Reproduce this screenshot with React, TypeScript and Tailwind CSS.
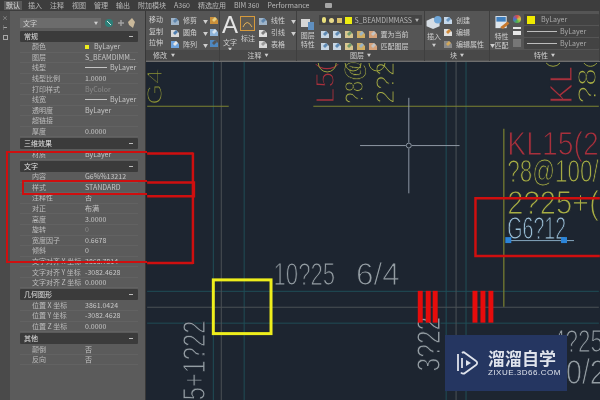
import * as React from "react";

const menu = ["默认", "插入", "注释", "视图", "管理", "输出", "附加模块", "A360", "精选应用", "BIM 360", "Performance"];

type Row = { label: string; value?: string; line?: boolean; swatch?: boolean; dim?: boolean };

const sections: Array<{ title: string; rows: Row[] }> = [
  {
    title: "常规",
    rows: [
      { label: "颜色", value: "ByLayer", swatch: true },
      { label: "图层", value: "S_BEAMDIMM..." },
      { label: "线型", value: "ByLayer", line: true },
      { label: "线型比例", value: "1.0000" },
      { label: "打印样式", value: "ByColor", dim: true },
      { label: "线宽", value: "ByLayer", line: true },
      { label: "透明度", value: "ByLayer" },
      { label: "超链接" },
      { label: "厚度", value: "0.0000" },
    ],
  },
  { title: "三维效果", rows: [{ label: "材质", value: "ByLayer" }] },
  {
    title: "文字",
    rows: [
      { label: "内容", value: "G6%%13212" },
      { label: "样式", value: "STANDARD" },
      { label: "注释性", value: "否" },
      { label: "对正", value: "布满" },
      { label: "高度", value: "3.0000" },
      { label: "旋转", value: "0", dim: true },
      { label: "宽度因子", value: "0.6678" },
      { label: "倾斜", value: "0" },
      { label: "文字对齐 X 坐标", value: "3868.7814" },
      { label: "文字对齐 Y 坐标", value: "-3082.4628" },
      { label: "文字对齐 Z 坐标", value: "0.0000" },
    ],
  },
  {
    title: "几何图形",
    rows: [
      { label: "位置 X 坐标", value: "3861.0424" },
      { label: "位置 Y 坐标", value: "-3082.4628" },
      { label: "位置 Z 坐标", value: "0.0000" },
    ],
  },
  {
    title: "其他",
    rows: [
      { label: "颠倒", value: "否" },
      { label: "反向", value: "否" },
    ],
  },
];

const Glyph = ({ c = "#9fb4c8", d = "#5f86ad" }: { c?: string; d?: string }) => (
  <svg width="10" height="10" viewBox="0 0 10 10" className="shrink-0">
    <path d="M1 2h5l3 3v4H1z" fill={c} />
    <path d="M3 5l3-3 2 2-3 3z" fill={d} />
  </svg>
);

const ToolRow = ({ text, caret, c, d }: { text: string; caret?: boolean; c?: string; d?: string }) => (
  <div className="flex items-center gap-[3px] h-[12px] whitespace-nowrap">
    <Glyph c={c} d={d} />
    <span>{text}</span>
    {caret && <span className="text-[5px] ml-[3px]">▼</span>}
  </div>
);

const Group = ({
  title,
  w,
  left,
  children,
}: {
  title: string;
  w: string;
  left?: boolean;
  children: React.ReactNode;
}) => (
  <div className={`${w} shrink-0 flex flex-col border-r border-[#3f3f3f]`}>
    <div className="h-[39px] flex">{children}</div>
    <div
      className={
        left
          ? "h-[10px] bg-[#484848] flex items-center pl-[7px] gap-[4px]"
          : "h-[10px] bg-[#484848] flex items-center justify-center gap-[3px]"
      }
    >
      <span>{title}</span>
      <span className="text-[4px]">▼</span>
    </div>
  </div>
);

const Combo = ({ children }: { children: React.ReactNode }) => (
  <div className="h-[11px] mb-px flex items-center bg-[#434343] rounded-[1px] px-[3px] text-[#a9a9a9]">{children}</div>
);

const LineValue = () => <span className="w-[22px] h-px bg-[#c4c4c4] mr-[3px]" />;

const PropertiesPanel = () => (
  <div className="w-[146px] shrink-0 flex bg-[#5b5b5b] border-r border-[#383838] h-full">
    <div className="w-[12px] bg-[#4a4a4a] flex flex-col items-center gap-[4px] pt-[4px] text-[#a8a8a8]">
      <span className="text-[6px] leading-[6px]">×</span>
      <span className="text-[5px] leading-[6px]">⊢</span>
      <span className="w-[5px] h-[5px] border border-[#a8a8a8]" />
    </div>
    <div className="flex-1 pl-[10px] pr-[7px] pt-[7px]">
      <div className="flex items-center h-[10px] mb-[3px]">
        <div className="w-[81px] h-[10px] bg-[#6c6c6c] flex items-center justify-between px-[3px] text-[#d0d0d0]">
          <span>文字</span>
          <span className="text-[4px]">▼</span>
        </div>
        <svg width="34" height="12" viewBox="0 0 34 12" className="ml-[3px]">
          <circle cx="5" cy="6" r="4" fill="#2d7f78" />
          <path d="M3 4l4 4" stroke="#d8e8e8" strokeWidth="1" />
          <path d="M17 3v6M14 6h6" stroke="#a3a3a3" strokeWidth="1.4" />
          <path d="M28 1l3 4-2 6-4-3-1-3z" fill="#c9b89a" />
        </svg>
      </div>
      {sections.map((s) => (
        <div key={s.title}>
          <div className="h-[11px] mt-px bg-[#3b3b3b] flex items-center justify-between pl-[4px] pr-[5px] text-[#e2e2e2] rounded-[1px]">
            <span>{s.title}</span>
            <span className="w-[4px] h-px bg-[#bdbdbd]" />
          </div>
          {s.rows.map((r) => (
            <div key={r.label} className="h-[10.6px] flex items-center border-b border-[#626262] whitespace-nowrap">
              <span className="w-[65px] shrink-0 pl-[12px] text-[#bdbdbd]">{r.label}</span>
              {r.swatch && <span className="w-[4px] h-[4px] bg-[#ecec1e] mr-[5px]" />}
              {r.line && <LineValue />}
              <span className={r.dim ? "text-[#8c8c8c]" : "text-[#c6c6c6]"}>{r.value}</span>
            </div>
          ))}
        </div>
      ))}
    </div>
  </div>
);

const Ribbon = () => (
  <div className="h-[50px] flex bg-[#555555] text-[#cfcfcf]">
    <Group title="修改" w="w-[74px]" left>
      <div className="flex flex-col pt-[4px] pl-[3px] gap-0 w-[26px]">
        <div className="h-[12px]">移动</div>
        <div className="h-[12px]">复制</div>
        <div className="h-[12px]">拉伸</div>
      </div>
      <div className="flex flex-col pt-[4px]">
        <ToolRow text="修剪" caret />
        <ToolRow text="圆角" caret c="#d8d8d8" d="#4f7eb0" />
        <ToolRow text="阵列" caret c="#6fa4e0" d="#e8e8e8" />
      </div>
      <div className="flex flex-col pt-[4px] pl-[1px]">
        <div className="h-[12px]"><Glyph c="#c98f3a" d="#e8d080" /></div>
        <div className="h-[12px]"><Glyph c="#8fb4d8" d="#d8e4ee" /></div>
        <div className="h-[12px]"><Glyph c="#4f88c0" d="#555555" /></div>
      </div>
    </Group>
    <Group title="注释" w="w-[77px]">
      <div className="w-[25px] flex flex-col items-center">
        <span className="text-[24px] leading-[26px] text-[#e4e4e4] font-['Liberation_Sans'] mt-px">A</span>
        <span className="leading-[9px]">文字</span>
        <span className="text-[4px] leading-[5px]">▼</span>
      </div>
      <div className="w-[20px] flex flex-col items-center pt-[5px]">
        <svg width="15" height="15" viewBox="0 0 15 15">
          <rect x="0.5" y="0.5" width="14" height="14" fill="#5f5a50" stroke="#d69a3c" />
          <path d="M3 11q4-9 9 0" fill="none" stroke="#e3b25a" />
        </svg>
        <span className="leading-[10px] mt-[2px]">标注</span>
      </div>
      <div className="flex flex-col pt-[4px] pl-[2px]">
        <ToolRow text="线性" caret />
        <ToolRow text="引线" caret c="#e0e0e0" d="#7f7f7f" />
        <ToolRow text="表格" c="#d8d8d8" d="#9a9a9a" />
      </div>
    </Group>
    <Group title="图层" w="w-[128px]">
      <div className="w-[23px] flex flex-col items-center pt-[5px] leading-[9px] text-center">
        <svg width="15" height="14" viewBox="0 0 15 14" className="mb-px">
          <path d="M1 3h9v8H1z" fill="#d6d6d6" />
          <path d="M8 6h6v8H8z" fill="#5f8fc0" />
        </svg>
        <span>图层</span>
        <span>特性</span>
      </div>
      <div className="flex-1 pt-[4px] pr-[2px]">
        <div className="h-[10px] bg-[#444444] flex items-center gap-[3px] px-[3px] text-[#b5b5b5] mb-[3px]">
          <span className="w-[4px] h-[6px] rounded-full bg-[#e9df7c]" />
          <span className="w-[5px] h-[5px] rounded-full bg-[#e8d98a]" />
          <span className="w-[5px] h-[5px] bg-[#d8bf6a]" />
          <span className="w-[7px] h-[7px] bg-[#eeee10]" />
          <span className="flex-1">S_BEAMDIMMASS</span>
          <span className="text-[4px]">▼</span>
        </div>
        {["置为当前", "匹配图层"].map((t) => (
          <div key={t} className="flex items-center h-[12px] gap-[2px] pl-[1px]">
            <Glyph c="#c7d6e4" d="#5d89b4" />
            <Glyph c="#c7d6e4" d="#5d89b4" />
            <Glyph c="#d8c690" d="#6f9a6a" />
            <Glyph c="#d2ae62" d="#9bb4c4" />
            <Glyph c="#d6a27a" d="#c4c4c4" />
            <span className="ml-[1px]">{t}</span>
          </div>
        ))}
      </div>
    </Group>
    <Group title="块" w="w-[65px]">
      <div className="w-[28px] flex flex-col items-center pt-[5px] leading-[9px]">
        <svg width="18" height="15" viewBox="0 0 18 15" className="mb-[2px]">
          <path d="M1 5l7-3 7 3v6l-7 3-7-3z" fill="#d6dde4" />
          <circle cx="13" cy="4" r="4" fill="#6fa6d8" />
        </svg>
        <span>插入</span>
        <span className="text-[4px]">▼</span>
      </div>
      <div className="flex flex-col pt-[3px]">
        <ToolRow text="创建" c="#c6d8ea" d="#6a96c0" />
        <ToolRow text="编辑" c="#e0e0e0" d="#d08a3a" />
        <ToolRow text="编辑属性" caret c="#8a8a8a" d="#d2a85a" />
      </div>
    </Group>
    <Group title="特性" w="flex-1 min-w-0">
      <div className="w-[23px] flex flex-col items-center pt-[5px] leading-[9px]">
        <svg width="16" height="15" viewBox="0 0 16 15" className="mb-[2px]">
          <rect x="1" y="0" width="12" height="13" fill="#dfe6ec" />
          <rect x="2" y="1" width="10" height="5" fill="#3f7fbe" />
          <path d="M6 12l8-6 2 2-7 6z" fill="#c7782c" />
        </svg>
        <span>特性</span>
        <span>匹配</span>
      </div>
      <div className="w-[11px] flex flex-col gap-[4px] pt-[4px]">
        <span className="w-[8px] h-[8px] rounded-full bg-[conic-gradient(#d84a4a,#d8c84a,#4ab04a,#4a6ad8,#d84a4a)]" />
        <span className="w-[8px] h-[8px] bg-[linear-gradient(#e8e8e8_25%,#555_25%,#555_50%,#e8e8e8_50%)]" />
        <span className="w-[8px] h-[8px] bg-[#777777]" />
      </div>
      <div className="flex-1 pt-[3px]">
        <Combo>
          <span className="w-[8px] h-[8px] bg-[#f0ea00] mr-[6px]" />
          ByLayer
        </Combo>
        <Combo>
          <span className="w-[30px] h-px bg-[#bdbdbd] mr-[3px]" />
          ByLayer
        </Combo>
        <Combo>
          <span className="w-[30px] h-px bg-[#bdbdbd] mr-[3px]" />
          ByLayer
        </Combo>
      </div>
    </Group>
  </div>
);

const cad = { fontFamily: "'Liberation Sans', sans-serif", fontWeight: 400 };

const CadText = ({
  x,
  y,
  size,
  w,
  fill,
  rotate,
  children,
}: {
  x: number;
  y: number;
  size: number;
  w: number;
  fill: string;
  rotate?: boolean;
  children: string;
}) => (
  <text
    x={x}
    y={y}
    fontSize={size}
    fill={fill}
    stroke="#1d2530"
    strokeWidth={1.1}
    textLength={w}
    lengthAdjust="spacingAndGlyphs"
    transform={rotate ? `rotate(-90 ${x} ${y})` : undefined}
    style={cad}
  >
    {children}
  </text>
);

// everything in here is the drawing itself, coordinates are relative to the canvas corner (146, 60)
const Drawing = () => (
  <svg width="454" height="340" viewBox="146 60 454 340" className="block">
    <g stroke="#1f4e57" strokeWidth="1">
      <path d="M212.5 60v340M243.500 60v340M446.500 60v340M466.500 60v340" />
      <path d="M146 290.500h454M146 322.500h454" />
    </g>
    <g stroke="#4c5256" strokeWidth="1">
      <path d="M220.500 60v340M456.500 60v340M146 306.500h454" />
    </g>
    <path d="M146 104.500h82M313 104.500h287M504.500 127v179" stroke="#7c8230" strokeWidth="1.2" />

    <CadText x={161} y={103} size={22} w={36} fill="#8e9435" rotate>G4</CadText>
    <CadText x={334} y={102} size={26} w={42} fill="#a8303c" rotate>L5(</CadText>
    <CadText x={363} y={102} size={26} w={44} fill="#a8ae44" rotate>?8@</CadText>
    <CadText x={394} y={102} size={26} w={42} fill="#a8ae44" rotate>2?2</CadText>
    <CadText x={573} y={102} size={32} w={38} fill="#a8303c" rotate>KL</CadText>
    <CadText x={597} y={102} size={26} w={36} fill="#a8ae44" rotate>?8</CadText>

    <path d="M318 61a9 9 0 0 0 18 0M345 61a8 8 0 0 0 16 0M369 61a8 8 0 0 0 16 0M547 61a9 9 0 0 0 14 0M585 61a8 8 0 0 0 13 0" fill="none" stroke="#9aa03c" />

    <CadText x={508} y={153} size={33} w={92} fill="#a8303c">KL15(2</CadText>
    <CadText x={508} y={181} size={32} w={92} fill="#a8ae44">?8@100/</CadText>
    <CadText x={508} y={213} size={33} w={92} fill="#a8ae44">2?25+(</CadText>
    <CadText x={508} y={238} size={32} w={59} fill="#9cc0d8">G6?12</CadText>
    <path d="M509 239.500h66" stroke="#86a8c0" />
    <rect x="506" y="236" width="6" height="6" fill="#2b84d8" />
    <rect x="562" y="236" width="6" height="6" fill="#2b84d8" />

    <CadText x={273} y={284} size={32} w={62} fill="#949da3">10?25</CadText>
    <CadText x={356} y={284} size={32} w={44} fill="#949da3">6/4</CadText>
    <CadText x={204} y={400} size={32} w={80} fill="#949da3" rotate>5+1?22</CadText>
    <CadText x={440} y={371} size={34} w={55} fill="#949da3" rotate>3?22</CadText>
    <CadText x={554} y={351} size={32} w={50} fill="#949da3">4?25</CadText>
    <CadText x={567} y={384} size={36} w={40} fill="#949da3">0/2</CadText>

    <g fill="#e60c0c">
      <rect x="418" y="290" width="5" height="32" />
      <rect x="426" y="290" width="5" height="32" />
      <rect x="433" y="290" width="5" height="32" />
      <rect x="473" y="290" width="5" height="32" />
      <rect x="481" y="290" width="5" height="32" />
      <rect x="489" y="290" width="5" height="32" />
    </g>

    <rect x="212.500" y="279" width="58" height="54" fill="none" stroke="#eeee1c" strokeWidth="3" />

    <g stroke="#8e98a4" strokeWidth="1">
      <path d="M360 144h46M412 144h48M409 96v45M409 147v45" />
      <circle cx="409" cy="144" r="2.500" fill="none" />
    </g>

    <path d="M192 151v112M601 197H476v58h125" fill="none" stroke="#cf0f0f" strokeWidth="2.500" />
    <path d="M146 152h46M146 262h46M146 181h47v14h-47" fill="none" stroke="#cf0f0f" strokeWidth="2.500" />
  </svg>
);

export default function App() {
  return (
    <div className="relative w-[600px] h-[400px] overflow-hidden flex flex-col bg-[#1d2530] text-[7px] leading-[9px] blur-[0.4px] font-['Noto_Sans_CJK_SC','Liberation_Sans',sans-serif]">
      <div className="h-[11px] shrink-0 bg-[#3d3d3d] flex items-center pl-[4px] gap-[8px] text-[#b9b9b9] whitespace-nowrap">
        {menu.map((m, i) => (
          <span key={m} className={i === 0 ? "bg-[#5a5a5a] px-[2px] -mr-[2px] text-[#dddddd]" : ""}>
            {m}
          </span>
        ))}
        <span className="ml-[8px] w-[7px] h-[5px] bg-[#a5a5a5] rounded-[1px]" />
      </div>
      <div className="flex-1 min-h-0 flex">
        <PropertiesPanel />
        <div className="flex-1 min-w-0 flex flex-col">
          <Ribbon />
          <div className="h-px bg-[#6e6e6e]" />
          <Drawing />
        </div>
      </div>

      {/* red markup over the properties panel */}
      <div className="absolute left-[6px] top-[151px] w-[141px] h-[112px] border-[2.5px] border-r-0 border-[#cf0f0f]" />
      <div className="absolute left-[22px] top-[180px] w-[125px] h-[15px] border-[2.5px] border-r-0 border-[#cf0f0f]" />

      {/* watermark */}
      <div className="absolute left-[445px] top-[335px] w-[122px] h-[56px] bg-[#253661] flex items-center pl-[10px] gap-[9px] text-[#dfe3ec]">
        <svg width="24" height="26" viewBox="0 0 24 26" fill="none" stroke="#dfe3ec" strokeWidth="1.8">
          <path d="M3 4v17" />
          <path d="M7 3c1-1 2-1 3 0l11 8c1.500 1 1.500 3 0 4L10 23c-1 1-3 1-4-.5" />
          <path d="M7 8v10" />
          <path d="M11 10l5 3-5 3z" fill="#dfe3ec" stroke="none" />
        </svg>
        <div className="flex flex-col">
          <span className="text-[17px] leading-[20px] font-bold whitespace-nowrap">溜溜自学</span>
          <span className="text-[8px] leading-[10px] tracking-[0.5px] whitespace-nowrap font-['Liberation_Sans']">ZIXUE.3D66.COM</span>
        </div>
      </div>
    </div>
  );
}
